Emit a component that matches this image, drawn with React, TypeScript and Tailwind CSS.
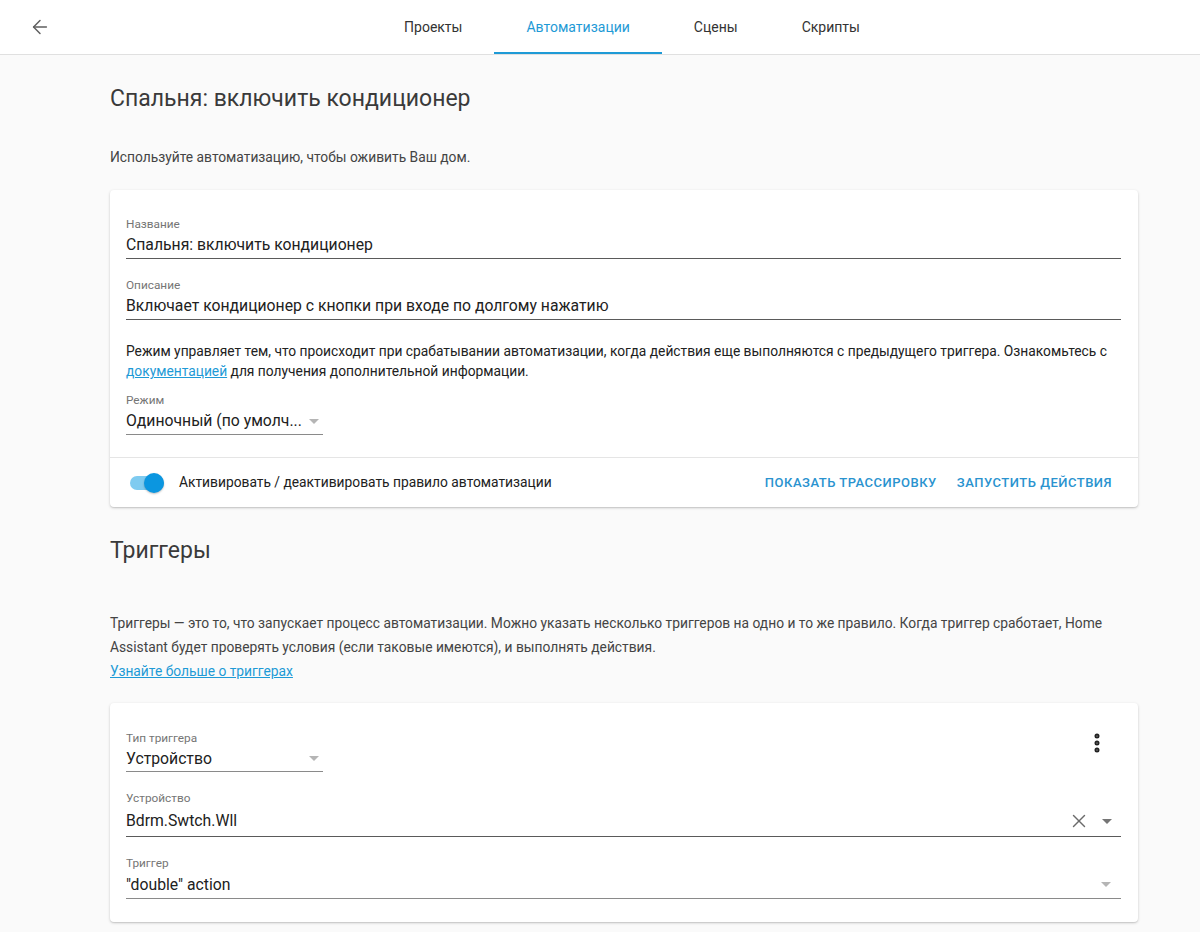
import { ArrowLeft, EllipsisVertical, X } from 'lucide-react';

const font = { fontFamily: 'Roboto, "Noto Sans", sans-serif' };

function Caret({ light }: { light?: boolean }) {
  return (
    <svg width="10" height="5" viewBox="0 0 10 5" className="shrink-0">
      <path d="M0 0 L10 0 L5 5 Z" fill={light ? '#b5b5b5' : '#757575'} />
    </svg>
  );
}

function Field({
  label,
  value,
  className = '',
  valueH = 'h-[26px]',
  line = 'border-[#5a5a5a]',
  right,
}: {
  label: string;
  value: string;
  className?: string;
  valueH?: string;
  line?: string;
  right?: React.ReactNode;
}) {
  return (
    <div className={`border-b ${line} ${className}`}>
      <div className="text-[11.8px] leading-4 text-[#757575]">{label}</div>
      <div className={`flex items-center justify-between text-[15.75px] text-[#212121] ${valueH}`}>
        <span className="truncate">{value}</span>
        {right}
      </div>
    </div>
  );
}

export default function App() {
  const tabs = ['Проекты', 'Автоматизации', 'Сцены', 'Скрипты'];

  return (
    <div className="min-h-screen bg-[#fafafa]" style={font}>
      {/* Toolbar */}
      <div className="flex h-[55px] items-stretch border-b border-[#e0e0e0] bg-white">
        <div className="flex w-16 items-center justify-center pl-[16px]">
          <ArrowLeft size={22} strokeWidth={1.6} className="text-[#5f5f5f]" />
        </div>
        <div className="flex flex-1 justify-center">
          {tabs.map((t) => (
            <div
              key={t}
              className={`flex items-center px-8 text-sm ${
                t === 'Автоматизации'
                  ? 'border-b-2 border-[#1e9ad6] pt-[2px] text-[#1e9ad6]'
                  : 'text-[#333]'
              }`}
            >
              {t}
            </div>
          ))}
        </div>
      </div>

      <div className="ml-[110px] w-[1028px] pt-[28px]">
        <h1 className="text-[23px] leading-8 text-[#3a3a3a]">Спальня: включить кондиционер</h1>
        <p className="mt-[32px] text-[13.8px] leading-5 text-[#444]">
          Используйте автоматизацию, чтобы оживить Ваш дом.
        </p>

        {/* Main card */}
        <div className="mt-[23px] rounded bg-white shadow-[0_1px_3px_rgba(0,0,0,0.18),0_1px_1px_rgba(0,0,0,0.08)]">
          <div className="pl-4 pr-[17px] pt-[26px] pb-[22px]">
            <Field label="Название" value="Спальня: включить кондиционер" />
            <Field
              className="mt-[18px]"
              label="Описание"
              value=" Включает кондиционер с кнопки при входе по долгому нажатию"
            />
            <p className="mt-[21px] text-[13.8px] leading-5 text-[#212121]">
              Режим управляет тем, что происходит при срабатывании автоматизации, когда действия еще выполняются с
              предыдущего триггера. Ознакомьтесь с{' '}
              <span className="text-[#1e9ad6] underline">документацией</span> для получения дополнительной
              информации.
            </p>
            <Field
              className="mt-[11px] w-[197px]"
              label="Режим"
              value="Одиночный (по умолч..."
              line="border-[#8a8a8a]"
              right={
                <span className="pr-[4px]">
                  <Caret light />
                </span>
              }
            />
          </div>
          <div className="flex h-[50px] items-center border-t border-[#e5e5e5] pl-5 pr-[18px]">
            <div className="relative h-[14px] w-[34px] rounded-full bg-[#7fcbf0]">
              <div className="absolute -top-[3px] right-0 h-5 w-5 rounded-full bg-[#0b96e0] shadow-[0_1px_2px_rgba(0,0,0,0.25)]" />
            </div>
            <span className="ml-[15px] text-[13.8px] text-[#212121]">
              Активировать / деактивировать правило автоматизации
            </span>
            <div className="ml-auto flex gap-[4px]">
              <button className="px-2 text-[13px] font-medium tracking-[0.5px] text-[#2a93cf]">
                ПОКАЗАТЬ ТРАССИРОВКУ
              </button>
              <button className="px-2 text-[13px] font-medium tracking-[0.5px] text-[#2a93cf]">
                ЗАПУСТИТЬ ДЕЙСТВИЯ
              </button>
            </div>
          </div>
        </div>

        <h2 className="mt-[28px] text-[23px] leading-8 text-[#3a3a3a]">Триггеры</h2>
        <p className="mt-[44px] text-[13.8px] leading-6 text-[#444]">
          Триггеры — это то, что запускает процесс автоматизации. Можно указать несколько триггеров на одно и то же
          правило. Когда триггер сработает, Home Assistant будет проверять условия (если таковые имеются), и
          выполнять действия.
          <br />
          <span className="text-[#1e9ad6] underline">Узнайте больше о триггерах</span>
        </p>

        {/* Trigger card */}
        <div className="mt-[20px] rounded bg-white pl-4 pr-[17px] pt-[27px] pb-[23px] shadow-[0_1px_3px_rgba(0,0,0,0.18),0_1px_1px_rgba(0,0,0,0.08)]">
          <div className="flex items-start justify-between">
            <Field
              className="w-[197px]"
              label="Тип триггера"
              value="Устройство"
              valueH="h-[25px]"
              line="border-[#8a8a8a]"
              right={
                <span className="pr-[4px]">
                  <Caret light />
                </span>
              }
            />
            <div className="mr-[12px] mt-[1px] flex h-6 w-6">
              <EllipsisVertical size={24} strokeWidth={3} className="text-[#212121]" />
            </div>
          </div>
          <Field
            className="mt-[18px]"
            label="Устройство"
            value="Bdrm.Swtch.Wll"
            valueH="h-[30px]"
            right={
              <span className="flex items-center gap-[12px] pr-[9px]">
                <X size={22} strokeWidth={1.5} className="text-[#6b6b6b]" />
                <Caret />
              </span>
            }
          />
          <Field
            className="mt-[18px]"
            label="Триггер"
            value={'"double" action'}
            valueH="h-[27px]"
            line="border-[#8a8a8a]"
            right={
              <span className="pr-[10px]">
                <Caret light />
              </span>
            }
          />
        </div>
      </div>
    </div>
  );
}
